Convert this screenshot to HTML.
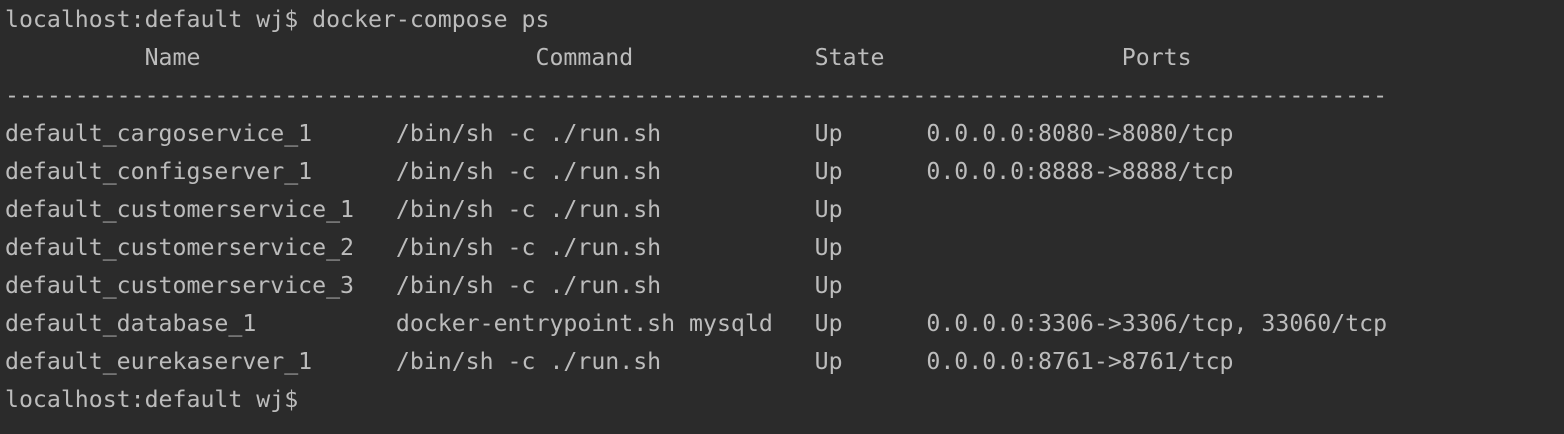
<!DOCTYPE html>
<html><head><meta charset="utf-8"><style>
html,body{margin:0;padding:0;background:#2b2b2b;width:1564px;height:434px;overflow:hidden}
pre{margin:0;padding:1px 0 0 5px;font-family:"DejaVu Sans Mono","Liberation Mono",monospace;font-size:23.2px;line-height:38px;color:#bcbcbc;white-space:pre}
</style></head><body><pre>localhost:default wj$ docker-compose ps
          Name                        Command             State                 Ports
---------------------------------------------------------------------------------------------------
default_cargoservice_1      /bin/sh -c ./run.sh           Up      0.0.0.0:8080-&gt;8080/tcp
default_configserver_1      /bin/sh -c ./run.sh           Up      0.0.0.0:8888-&gt;8888/tcp
default_customerservice_1   /bin/sh -c ./run.sh           Up
default_customerservice_2   /bin/sh -c ./run.sh           Up
default_customerservice_3   /bin/sh -c ./run.sh           Up
default_database_1          docker-entrypoint.sh mysqld   Up      0.0.0.0:3306-&gt;3306/tcp, 33060/tcp
default_eurekaserver_1      /bin/sh -c ./run.sh           Up      0.0.0.0:8761-&gt;8761/tcp
localhost:default wj$</pre></body></html>
